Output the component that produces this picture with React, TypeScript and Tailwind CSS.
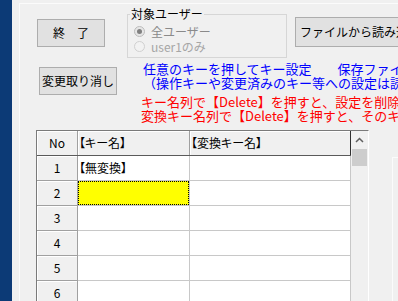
import React from "react";

const rows = [1, 2, 3, 4, 5, 6, 7];

function WinButton({ label, className }: { label: string; className: string }) {
    return (
        <button
            type="button"
            className={`shrink-0 bg-[#e1e1e1] border border-[#adadad] text-[12px] leading-[12px] text-black flex items-center justify-center whitespace-nowrap ${className}`}
        >
            {label}
        </button>
    );
}

function Radio({ checked, label, dim }: { checked: boolean; label: string; dim: string }) {
    return (
        <div className="flex items-center h-[15px]">
            <span
                className={`ml-[6px] w-[11px] h-[11px] rounded-full border flex items-center justify-center shrink-0 ${
                    checked ? "border-[#bcbcbc] bg-[#e6e6e6]" : "border-[#d0d0d0] bg-[#f2f2f2]"
                }`}
            >
                {checked && <span className="w-[5px] h-[5px] rounded-full bg-[#808080]" />}
            </span>
            <span className={`ml-[6px] text-[12px] leading-[12px] whitespace-nowrap ${dim}`}>{label}</span>
        </div>
    );
}

export default function App() {
    return (
        <div className="w-[398px] h-[301px] overflow-hidden bg-[#f0f0f0] flex font-['Noto_Sans_CJK_JP',sans-serif] text-black">
            {/* left side strip */}
            <div className="w-[12px] shrink-0 bg-[#0c3a76]" />

            {/* tab page */}
            <div className="ml-[7px] mt-[3px] flex-1 min-w-0 border-l border-t border-[#fbfbfb] flex flex-col">
                {/* top row */}
                <div className="flex items-start h-[54px] shrink-0">
                    <WinButton label="終　了" className="ml-[17px] mt-[15px] w-[68px] h-[28px]" />

                    <fieldset className="ml-[22px] mt-[4px] w-[160px] h-[50px] shrink-0 border border-[#d6d6d6]">
                        <legend className="ml-[2px] px-[1px] text-[12px] leading-[12px] whitespace-nowrap">対象ユーザー</legend>
                        <div className="mt-[4px] flex flex-col">
                            <Radio checked label="全ユーザー" dim="text-[#8a8a8a]" />
                            <Radio checked={false} label="user1のみ" dim="text-[#a6a6a6]" />
                        </div>
                    </fieldset>

                    <WinButton label="ファイルから読み込み" className="ml-[8px] mt-[13px] w-[130px] h-[30px]" />
                </div>

                {/* second row */}
                <div className="flex items-start h-[72px] shrink-0">
                    <WinButton label="変更取り消し" className="ml-[19px] mt-[9px] w-[78px] h-[28px]" />
                    <div className="ml-[24px] mt-[4px] text-[13px] leading-[14px] whitespace-nowrap">
                        <div className="ml-[2px] text-[#0000ff]">
                            <p>任意のキーを押してキー設定　　保存ファイル：keyset.ini</p>
                            <p>（操作キーや変更済みのキー等への設定は読み込み時に無視されます）</p>
                        </div>
                        <div className="mt-[5px] text-[#ff0000]">
                            <p>キー名列で【Delete】を押すと、設定を削除します</p>
                            <p>変換キー名列で【Delete】を押すと、そのキーを無効にします</p>
                        </div>
                    </div>
                </div>

                {/* grid area */}
                <div className="flex items-start flex-1 min-h-0">
                    <div className="ml-[16px] w-[333px] shrink-0 border-t border-l border-[#7a7a7a] border-r-[#ffffff] border-r flex text-[12px] leading-[12px] [font-feature-settings:'palt']">
                        <div className="w-[314px] shrink-0 bg-white">
                            {/* header */}
                            <div className="flex h-[25px] border-b border-[#5a5a5a] bg-[#f0f0f0]">
                                <div className="w-[41px] border-r border-[#a0a0a0] shadow-[inset_1px_1px_0_#ffffff] flex items-center justify-center">No</div>
                                <div className="w-[112px] border-r border-[#a0a0a0] shadow-[inset_1px_1px_0_#ffffff] flex items-center pl-[1px]">【キー名】</div>
                                <div className="w-[161px] border-r border-[#303030] shadow-[inset_1px_1px_0_#ffffff] flex items-center pl-[1px]">【変換キー名】</div>
                            </div>
                            {rows.map((n) => (
                                <div key={n} className="flex h-[25px]">
                                    <div className="w-[41px] border-r border-b border-[#a0a0a0] bg-[#f0f0f0] shadow-[inset_1px_1px_0_#ffffff] flex items-center justify-center">
                                        {n}
                                    </div>
                                    <div className="w-[112px] border-r border-b border-[#c8c8c8]">
                                        {n === 2 ? (
                                            <div className="w-full h-full bg-[#ffff00] border border-dotted border-black" />
                                        ) : (
                                            <div className="h-full flex items-center pl-[1px]">{n === 1 ? "【無変換】" : ""}</div>
                                        )}
                                    </div>
                                    <div className="w-[161px] border-r border-b border-[#c8c8c8]" />
                                </div>
                            ))}
                        </div>

                        {/* scrollbar */}
                        <div className="w-[17px] shrink-0 self-stretch bg-[#f0f0f0] flex flex-col items-center">
                            <div className="h-[17px] w-full flex items-center justify-center">
                                <svg width="9" height="6" viewBox="0 0 9 6">
                                    <path d="M1 5 L4.5 1.5 L8 5" stroke="#606060" strokeWidth="1.5" fill="none" />
                                </svg>
                            </div>
                            <div className="mt-[1px] w-[15px] h-[17px] bg-[#cdcdcd]" />
                        </div>
                    </div>

                    {/* next panel edge */}
                    <div className="ml-[23px] mt-[27px] w-[20px] h-[200px] shrink-0 border-l border-t border-[#fbfbfb]" />
                </div>
            </div>
        </div>
    );
}
